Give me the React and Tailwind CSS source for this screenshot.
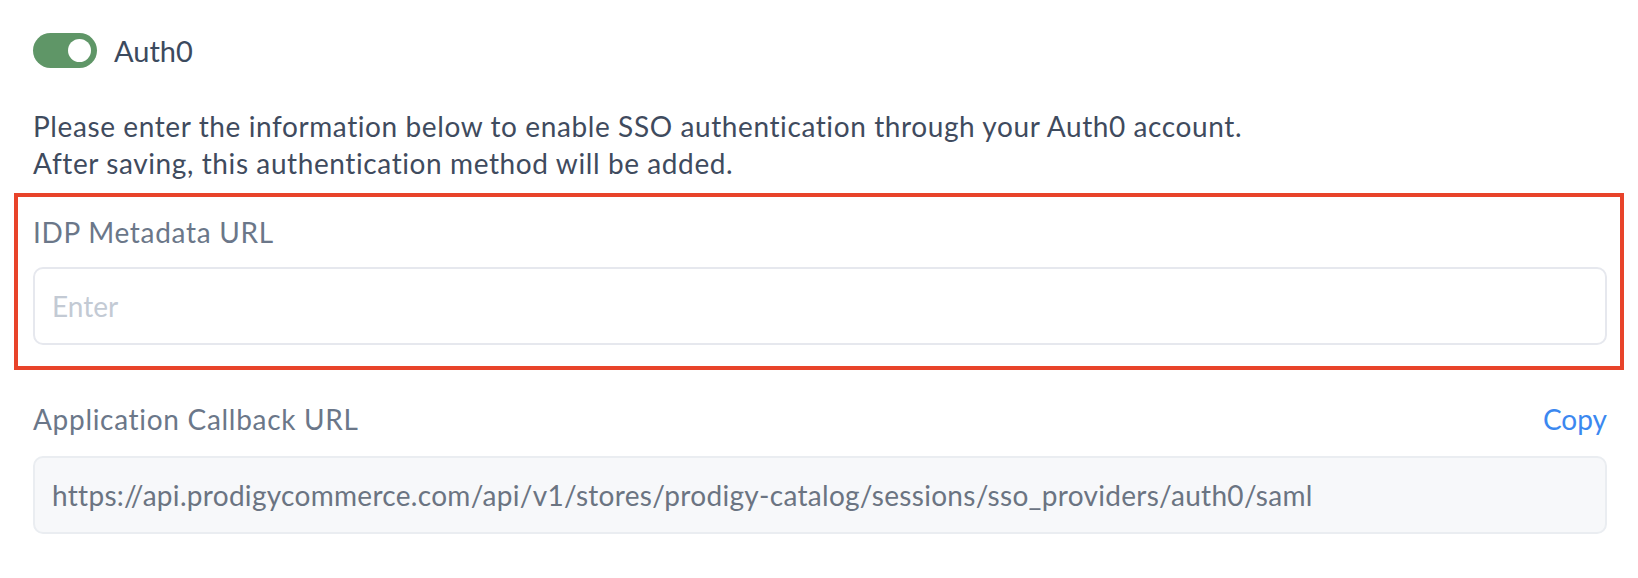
import React, { useState } from 'react';

const Toggle = ({ on, onChange }) => (
    <button
        type="button"
        onClick={() => onChange(!on)}
        className={`flex h-[35px] w-[64px] shrink-0 items-center rounded-full px-[6px] ${on ? 'justify-end bg-[#5f9667]' : 'justify-start bg-[#d1d5db]'}`}
    >
        <span className="block h-[23px] w-[23px] rounded-full bg-white" />
    </button>
);

const App = () => {
    const [enabled, setEnabled] = useState(true);
    const [metadataUrl, setMetadataUrl] = useState('');
    const callbackUrl = 'https://api.prodigycommerce.com/api/v1/stores/prodigy-catalog/sessions/sso_providers/auth0/saml';

    return (
        <div className="min-h-screen bg-white pl-[33px] pr-[31px] pt-[33px] font-['Lato',sans-serif]">
            <div className="flex items-center gap-[17px]">
                <Toggle on={enabled} onChange={setEnabled} />
                <span className="text-[29px] leading-[35px] text-[#3c4a5e]">Auth0</span>
            </div>

            <p className="mt-[40px] text-[28px] leading-[37px] tracking-[0.6px] text-[#3f4b5e]">
                Please enter the information below to enable SSO authentication through your Auth0 account.
                <br />
                After saving, this authentication method will be added.
            </p>

            <div className="ml-[-19px] mr-[-17px] mt-[11px] border-4 border-[#e8432a] pb-[21px] pl-[15px] pr-[13px] pt-[17px]">
                <label className="block text-[28px] leading-[37px] tracking-[0.7px] text-[#6b7789]">IDP Metadata URL</label>
                <input
                    type="text"
                    placeholder="Enter"
                    value={metadataUrl}
                    onChange={(e) => setMetadataUrl(e.target.value)}
                    className="mt-[16px] block h-[78px] w-full rounded-[10px] border-2 border-[#e6e8ee] bg-white px-[17px] text-[28px] text-[#3f4b5e] placeholder-[#c3cad4] focus:outline-none"
                />
            </div>

            <div className="mt-[31px] flex items-center justify-between text-[28px] leading-[37px]">
                <span className="tracking-[0.7px] text-[#6b7789]">Application Callback URL</span>
                <button type="button" className="text-[#3b88f0]">Copy</button>
            </div>
            <div className="mt-[18px] flex h-[78px] items-center rounded-[10px] border-2 border-[#eaedf1] bg-[#f7f8fa] px-[17px] text-[28px] tracking-[0.3px] text-[#6b7482]">
                {callbackUrl}
            </div>
        </div>
    );
};

export default App;
